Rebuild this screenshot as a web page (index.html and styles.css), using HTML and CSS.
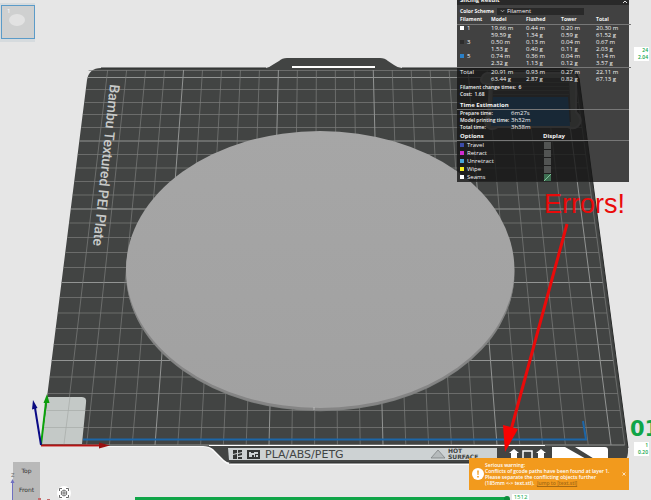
FILE: index.html
```html
<!DOCTYPE html>
<html lang="en">
<head>
<meta charset="utf-8">
<title>Slicing Result</title>
<link rel="stylesheet" href="styles.css">
</head>
<body>
<main class="viewport">
  <svg class="scene" viewBox="0 0 651 500" preserveAspectRatio="xMaxYMin slice" role="img" aria-label="Build plate">
    <defs>
      <linearGradient id="disc" x1="0" y1="0" x2="0" y2="1">
        <stop offset="0" stop-color="#a6a6a6"/><stop offset="1" stop-color="#a1a1a1"/>
      </linearGradient>
    </defs>
    <!-- plate -->
    <path fill="#fafafa" d="M41 447H203Q209 447 213 451L224 462Q227 465 231 465H620V445H41z"/>
    <path fill="#424443" d="M41 445L87 80Q89 68 101 68H266Q270 67 274 64L279 61Q282 58 287 58H380Q385 58 388 61L394 65Q398 68 402 68H566Q577 68 579 78L628 448Q629 463 618 463H231Q227 463 224 460L213 449Q209 446 203 446H41z"/>
    <path fill="#fff" d="M292 66H375V68H292z"/>
    <path fill="none" stroke="#292b2a" d="M101 68H266M402 68H566M579 78L628 448M229 463H618"/>
    <g id="grid" fill="none"></g>
    <!-- front lip -->
    <path fill="#fff" d="M209 445H545V446H209z"/>
    <path fill="#cdd2d3" d="M228 448H497V460H229z"/>
    <g fill="#333635">
      <path d="M233 450h4v3l-4 1zM238 450h4v2l-4 1zM233 455l4-1v5h-4zM238 454l4-1v2l-4 1zM238 457h4v2h-4z"/>
      <path fill-rule="evenodd" d="M247 450h13v9h-13zM249 452v5h3v-2h2v2h1v-3h3v-2h-4v1h-3v-1zM256 455v2h2v-2z"/>
    </g>
    <text class="lip-text" x="265" y="458">PLA/ABS/PETG</text>
    <path fill="#b6bbbc" stroke="#777b7c" stroke-width=".7" d="M438 450l7 8h-14z"/>
    <text class="hot-text" x="448" y="453">HOT</text>
    <text class="hot-text" x="448" y="459">SURFACE</text>
    <path fill="#fff" d="M514 449l5 4h-2v5h-6v-5h-2zM541 449l5 4h-2v5h-6v-5h-2z"/>
    <path fill="none" stroke="#fff" stroke-width="1.5" d="M523 460V451H532V460"/>
    <path fill="#fff" d="M552 447H565L588 460H552zM575 447H605Q608 447 608 450V460H596z"/>
    <!-- corner pad -->
    <path fill="#c4c9c7" d="M48 397H82Q87 397 86 403L82 444H41z"/>
    <path fill="none" stroke="#a6aaa8" stroke-width=".7" d="M70 397L64 444M45 410.500H85M43 427.500H84"/>
    <text class="plate-name" transform="translate(110 84) rotate(96)">Bambu Textured PEI Plate</text>
    <path fill="none" stroke="#1c66a8" stroke-width="2" d="M83 439.500H586L583 421"/>
    <!-- printed disc -->
    <path fill="#7d7f7e" d="M126 270A194 138 0 0 0 514.500 270V273A194 138 0 0 1 126 273z"/>
    <ellipse fill="#858585" cx="320.200" cy="272" rx="194.200" ry="138.500"/>
    <ellipse fill="url(#disc)" cx="320.200" cy="269.500" rx="194.200" ry="138.500"/>
    <path stroke="#c8c8c8" stroke-width=".7" d="M314 407V410"/>
    <!-- prime tower -->
    <path fill="#858786" stroke="#979998" stroke-width="2" d="M488 73H568Q576 73 576 80L576 112Q584 120 578 126Q574 130 568 127H498Q490 132 486 125Q483 119 488 116L490 84Q478 84 482 77Q484 73 488 73z"/>
    <path fill="#505251" d="M493 78H569L571 122H492z"/>
    <path fill="none" stroke="#6a6c6b" d="M493 82.500H569M493 86.500H569M493 90.500H569M493 94.500H569"/>
    <path fill="#2670b4" d="M493 97H568L570 126H491z"/>
    <!-- origin axes -->
    <g stroke-width="2">
      <path stroke="#b51414" d="M41 445.500H100"/><path fill="#9b1010" d="M99 442.500L110 445.500L99 448.500z"/>
      <path stroke="#0ba30b" d="M41 445L46 402"/><path fill="#0b9d0b" d="M47 394L49.500 403H43.500z"/>
      <path stroke="#0a0a86" d="M41 445L35 408"/><path fill="#0a0a80" d="M33 400L37.500 408L32 409.500z"/>
    </g>
    <text class="plate-number" x="630" y="436">01</text>
    <!-- view cube -->
    <path fill="#b9b9b9" d="M13 462H40V500H13z"/>
    <text class="cube-text" x="26.500" y="473">Top</text>
    <text class="cube-text" x="26.500" y="492">Front</text>
    <path stroke="#6f6fc0" d="M12.500 482V500"/><path fill="#6f6fc0" d="M10.500 483l2-4l2 4z"/>
    <text class="axis-text" x="11" y="477">Z</text>
    <path fill="#c46a6a" d="M38 498h3v2h-3zM47 499h3v1h-3z"/>
    <!-- annotation -->
    <path stroke="#ea0a0a" stroke-width="3" d="M567 224L511 430"/>
    <path fill="#f90202" d="M503 425L518 429L505 452z"/>
    <text class="errors" x="544" y="213">Errors!</text>
  </svg>

  <button class="thumb" aria-label="Plate 1">
    <span class="thumb-number">1</span>
    <span class="thumb-disc"></span>
  </button>

  <section class="panel">
    <header class="panel-title"><span>Slicing Result</span>
      <svg class="fold" viewBox="0 0 6 6" aria-hidden="true"><path d="M1 3l2-2l2 2M1 6l2-2l2 2"/></svg>
    </header>
    <div class="panel-body">
      <div class="scheme">
        <label for="scheme">Color Scheme</label>
        <span class="select-wrap">
          <svg class="chevron" viewBox="0 0 6 4" aria-hidden="true"><path d="M1 1l2 2l2-2"/></svg>
          <select id="scheme"><option>Filament</option></select>
        </span>
      </div>
      <table class="usage">
        <thead><tr><th>Filament</th><th>Model</th><th>Flushed</th><th>Tower</th><th>Total</th></tr></thead>
        <tbody>
          <tr><td><i class="swatch white"></i>1</td><td>19.66 m<br>59.59 g</td><td>0.44 m<br>1.34 g</td><td>0.20 m<br>0.59 g</td><td>20.30 m<br>61.52 g</td></tr>
          <tr><td><i class="swatch dark"></i>3</td><td>0.50 m<br>1.53 g</td><td>0.13 m<br>0.40 g</td><td>0.04 m<br>0.11 g</td><td>0.67 m<br>2.03 g</td></tr>
          <tr><td><i class="swatch blue"></i>5</td><td>0.74 m<br>2.32 g</td><td>0.36 m<br>1.13 g</td><td>0.04 m<br>0.12 g</td><td>1.14 m<br>3.57 g</td></tr>
        </tbody>
        <tfoot>
          <tr><td>Total</td><td>20.91 m<br>63.44 g</td><td>0.93 m<br>2.87 g</td><td>0.27 m<br>0.82 g</td><td>22.11 m<br>67.13 g</td></tr>
        </tfoot>
      </table>
      <p class="line">Filament change times:&nbsp; 6</p>
      <p class="line">Cost:&nbsp; 1.68</p>
      <h2 class="heading">Time Estimation</h2>
      <dl class="times">
        <dt>Prepare time:</dt><dd>6m27s</dd>
        <dt>Model printing time:</dt><dd>3h32m</dd>
        <dt>Total time:</dt><dd>3h38m</dd>
      </dl>
      <h2 class="heading options-head"><span>Options</span><span>Display</span></h2>
      <div class="options">
        <label class="option"><span><i class="swatch travel"></i>Travel</span><input type="checkbox"></label>
        <label class="option"><span><i class="swatch retract"></i>Retract</span><input type="checkbox"></label>
        <label class="option"><span><i class="swatch unretract"></i>Unretract</span><input type="checkbox"></label>
        <label class="option"><span><i class="swatch wipe"></i>Wipe</span><input type="checkbox"></label>
        <label class="option"><span><i class="swatch white"></i>Seams</span><input type="checkbox" checked></label>
      </div>
    </div>
  </section>

  <div class="layer-tag top-tag">24<br>2.04</div>
  <div class="layer-tag bottom-tag">1<br>0.20</div>

  <button class="fit" aria-label="Fit view">
    <svg viewBox="0 0 14 14" aria-hidden="true"><path d="M2.500 5V2.500H5M9 2.500h2.500V5M11.500 9v2.500H9M5 11.500H2.500V9M7 4l2.600 1.500v3L7 10L4.400 8.500v-3z"/><circle cx="7" cy="7" r="1.200"/></svg>
  </button>

  <div class="steps">
    <div class="track"></div>
    <span class="step-tag">1512</span>
  </div>

  <aside class="warning">
    <svg class="alert" viewBox="0 0 12 12" aria-hidden="true"><circle cx="6" cy="6" r="6" fill="#fff"/><path d="M5.200 2.500h1.600l-.3 4.500h-1zM5.200 8h1.600v1.600H5.200z" fill="#f29a1d"/></svg>
    <p class="warning-text">Serious warning:<br>Conflicts of gcode paths have been found at layer 1.<br>Please separate the conflicting objects further<br>(185mm &lt;-&gt; text.stl).&nbsp; <a href="#scheme">Jump to [text.stl]</a></p>
    <button class="close" aria-label="Close"><svg viewBox="0 0 4 4" aria-hidden="true"><path d="M.5.5l3 3M3.500.5l-3 3"/></svg></button>
  </aside>
</main>
<script src="grid.js"></script>
</body>
</html>
```
FILE: grid.js
```js
// Perspective grid of the build plate: one line per centimetre, brighter every fifth.
const rows = [445, 427.5, 410.5, 393.5, 377, 360.5, 344.5, 328.5, 313, 297.5, 282.5, 267.5, 252.5,
  237.5, 223, 209, 195, 181.5, 168, 154.5, 141, 127.5, 114.5, 102.5, 89.5, 77.5, 70.5];
const grid = document.getElementById("grid");
const top70 = k => 88.7 + 18.97 * k;
const bottom445 = k => 41 + 22.8 * k;
const xAt = (k, y) => top70(k) + (bottom445(k) - top70(k)) * (y - 70) / 375;

function line(d, major) {
  const path = document.createElementNS("http://www.w3.org/2000/svg", "path");
  path.setAttribute("d", d);
  path.setAttribute("class", major ? "grid-major" : "grid-minor");
  grid.appendChild(path);
}
rows.forEach((y, i) => line(`M${xAt(0, y)} ${y}L${xAt(25.6, y)} ${y}`, i % 5 === 0));
for (let k = 1; k <= 25; k++) line(`M${top70(k)} 70L${bottom445(k)} 445`, k % 5 === 0);
line(`M${top70(25.6)} 70L${bottom445(25.6)} 445`, false);
```
FILE: styles.css
```css
* { box-sizing: border-box; }
body { margin: 0; background: #e6e6e6; font-family: "Open Sans", "Noto Sans", sans-serif; }
button { padding: 0; border: 0; background: none; font: inherit; }

.viewport { position: relative; height: 100vh; overflow: hidden; }
.scene { display: block; width: 100%; height: 100%; }

.grid-minor { stroke: #7c7e7d; stroke-width: 0.7px; }
.grid-major { stroke: #929493; stroke-width: 1px; }

.lip-text { font: 11px "DejaVu Sans", sans-serif; fill: #414443; }
.hot-text { font: bold 6px "DejaVu Sans", sans-serif; fill: #414443; }
.plate-name { font: 500 14px Roboto, sans-serif; fill: #c9cbca; }
.plate-number { font: bold 21px "DejaVu Sans", sans-serif; fill: #10a548; }
.cube-text { font: 6px "DejaVu Sans", sans-serif; fill: #333; text-anchor: middle; }
.axis-text { font: 5px "DejaVu Sans", sans-serif; fill: #666; }
.errors { font: 27px "Liberation Sans", sans-serif; fill: #ea0a0a; }

.thumb { position: absolute; left: 0; top: 3px; width: 35px; height: 39px; background: #d6dbde; }
.thumb::before { content: ""; position: absolute; left: 1px; top: 2px; width: 32px; height: 32px; border: 1px solid #5b9bc8; background: #cfd0d0; }
.thumb-number { position: absolute; left: 7px; top: 4px; font-size: 6px; color: #fff; }
.thumb-disc { position: absolute; left: 9px; top: 11px; width: 16px; height: 12px; border-radius: 50%; background: #e2e2e2; }

.panel { position: absolute; top: -4px; right: 22px; width: 172px; background: rgba(20, 20, 20, 0.79); color: #f4f4f4; font-size: 5px; font-weight: 600; line-height: 7px; }
.panel-title { display: flex; justify-content: space-between; height: 9px; padding: 1px 1px 0 3px; background: #292929; font-size: 6px; font-weight: bold; }
.fold { width: 6px; height: 6px; fill: none; stroke: #ddd; stroke-width: 1px; }
.panel-body { padding: 2px 0 1px; }

.scheme { display: flex; align-items: center; gap: 3px; height: 8px; padding-left: 3px; font-weight: bold; }
.select-wrap { display: flex; align-items: center; gap: 2px; width: 87px; height: 7px; padding-left: 3px; background: #292929; }
.chevron { width: 5px; height: 4px; fill: none; stroke: #bbb; stroke-width: 1px; }
.scheme select { flex: 1; padding: 0; border: 0; background: none; color: #f0f0f0; font: 6px/7px "Open Sans", sans-serif; appearance: none; }

.usage { width: 100%; border-collapse: collapse; table-layout: fixed; }
.usage th, .usage td { padding: 0; text-align: left; vertical-align: top; font-size: 6px; font-weight: 500; line-height: 7px; }
.usage th { padding: 1px 0; width: 35px; font-size: 5px; font-weight: bold; }
.usage th:first-child { width: 34px; }
.usage th:first-child, .usage td:first-child { padding-left: 3px; }
.usage thead, .usage tbody { border-bottom: 1px solid #777; }
.usage tfoot td { padding: 1px 0; }

.swatch { display: inline-block; width: 4px; height: 4px; margin-right: 3px; }
.white { background: #fff; }
.dark { background: #2c2c2c; }
.blue { background: #2a80c8; }
.travel { background: #3b4ba8; }
.retract { background: #cf2bcf; }
.unretract { background: #46a5d8; }
.wipe { background: #f6ee1f; }

.line { margin: 0 0 0 3px; }
.heading { margin: 3px 0 0; padding-left: 3px; border-bottom: 1px solid #777; font-size: 6px; line-height: 8px; font-weight: bold; }
.times { display: grid; grid-template-columns: 51px 1fr; margin: 0 0 0 3px; }
.times dd { margin: 0; font-size: 6px; font-weight: 500; }
.options-head { display: grid; grid-template-columns: 83px 1fr; margin-top: 1px; }
.option { display: grid; grid-template-columns: 84px 1fr; align-items: center; height: 8px; padding-left: 3px; font-size: 6px; font-weight: 500; }
.option input { width: 7px; height: 7px; margin: 0; border: 0; background: #525453; appearance: none; }
.option input:checked { background: #3e6e52 linear-gradient(135deg, transparent 45%, #7fc79a 45%, #7fc79a 55%, transparent 55%); }

.layer-tag { position: absolute; right: 2px; width: 15px; padding-right: 1px; background: #fff; color: #10a548; font-size: 5px; font-weight: 600; line-height: 7px; text-align: right; }
.top-tag { top: 47px; }
.bottom-tag { top: 442px; }

.fit { position: absolute; left: 57px; top: 486px; width: 14px; height: 14px; border-radius: 50%; background: #fff; }
.fit svg { display: block; fill: none; stroke: #444; stroke-width: 0.8px; }

.steps { position: absolute; left: 135px; right: 122px; top: 494px; display: flex; align-items: flex-start; gap: 5px; }
.track { position: relative; flex: 1; height: 5px; margin-top: 3px; background: #10a548; }
.track::after { content: ""; position: absolute; right: -3px; top: -1px; width: 6px; height: 6px; border-radius: 50%; background: #0b8d3c; }
.step-tag { width: 17px; background: #fff; color: #10a548; font-size: 6px; line-height: 6px; text-align: center; }

.warning { position: absolute; right: 22px; top: 458px; display: flex; align-items: center; width: 160px; height: 32px; padding: 0 3px; background: #f29a1d; color: #fff; font-size: 5px; font-weight: 600; }
.alert { flex: none; width: 12px; height: 12px; margin-right: 1px; }
.warning-text { flex: 1; margin: 0; line-height: 6px; white-space: nowrap; }
.warning a { color: #a66a14; }
.close { width: 4px; height: 4px; }
.close svg { display: block; stroke: #fff; stroke-width: 0.7px; }
```
